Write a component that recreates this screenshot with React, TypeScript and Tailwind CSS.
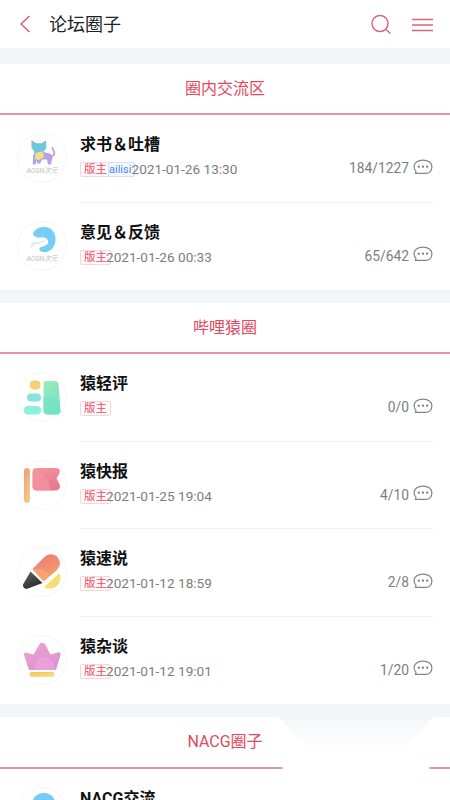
import React from "react";

type Kind = "cat" | "wave" | "blocks" | "flag" | "pencil" | "crown";

interface Row {
  title: string;
  kind: Kind;
  user?: string;
  date?: string;
  count: string;
}

const chat: Row[] = [
  { title: "求书＆吐槽", kind: "cat", user: "ailisi", date: "2021-01-26 13:30", count: "184/1227" },
  { title: "意见＆反馈", kind: "wave", date: "2021-01-26 00:33", count: "65/642" },
];

const bili: Row[] = [
  { title: "猿轻评", kind: "blocks", count: "0/0" },
  { title: "猿快报", kind: "flag", date: "2021-01-25 19:04", count: "4/10" },
  { title: "猿速说", kind: "pencil", date: "2021-01-12 18:59", count: "2/8" },
  { title: "猿杂谈", kind: "crown", date: "2021-01-12 19:01", count: "1/20" },
];

const nacg: Row[] = [{ title: "NACG交流", kind: "wave", count: "" }];

function Caption() {
  return (
    <text x="25" y="39.800" textAnchor="middle" fontSize="7.500" fontStyle="italic" textLength="31" lengthAdjust="spacingAndGlyphs" fill="#bdbdbd" className="font-[Roboto,'Noto_Sans_CJK_SC',sans-serif]">
      ACGN次元
    </text>
  );
}

function Picture({ kind }: { kind: Kind }) {
  switch (kind) {
    case "cat":
      return (
        <>
          <path d="M33 22.500c3.500 1.200 4.800-.5 4.200-3.500-.4-1.800-2-2.500-1.700-4" fill="none" stroke="#bd9be6" strokeWidth="1.800" strokeLinecap="round" />
          <path d="M14.500 7l4.500 3.300h5.500L29 7.500l.3 7.500-2.800 4 6 1.500c3 1 3.500 4 2.300 7l-.8 4h-3l-1-5h-5l-1.800 4h-3l-.7-3-1 4h-2.700l.3-8.500L17.500 19l-3-4.500z" fill="url(#catg)" />
          <path d="M18.500 20l7.500-2 1 6-5 3-4-1z" fill="#f6dc84" />
          <path d="M15 8.500l4.300 2.800h5.400L28.500 9l.3 5.500-3.800 4-6.500.3-3.500-4.500z" fill="#6bcbdc" />
          <Caption />
        </>
      );
    case "wave":
      return (
        <>
          <path d="M16 12.500C18 7.500 24 5 29.500 6.200C37 7.500 39.500 15 38.300 21C37 28 31.500 31.800 26 31C22.500 30.500 21 28 23.500 26.300C26 25 30 25 31 22C31.700 18 28 15.500 24 16.500C20 17 16.500 15.500 16 12.500Z" fill="#76ccf4" />
          <path d="M13.500 21.500c5-.5 10-.5 16-3.500-1 3-7 5-12 5.500l-4 4c0-2 .5-3 2-4.500z" fill="#d5edf9" />
          <Caption />
        </>
      );
    case "blocks":
      return (
        <>
          <rect x="13" y="8.500" width="10.500" height="9" rx="4" fill="#f7d071" />
          <rect x="10" y="21.500" width="14" height="8" rx="4" fill="#8be2d7" />
          <rect x="7" y="34" width="17" height="8.500" rx="4" fill="#8cf0de" />
          <path d="M29 9h9c2 0 3 1 3.500 3L43.500 38c.3 3-1 4.500-3 4.500H30.500c-2.500 0-4-1.500-4-4V12c0-2 .8-3 2.500-3z" fill="url(#greeng)" />
          <path d="M26.500 25c7-3 14 2 16 9l1 4c.3 3-1 4.500-3 4.500H30.500c-2.500 0-4-1.500-4-4z" fill="#74e2c8" opacity=".7" />
        </>
      );
    case "flag":
      return (
        <>
          <rect x="7" y="8" width="6" height="35" rx="3" fill="url(#poleg)" />
          <path d="M19.500 8H38c4.500 0 6 2.500 4 6l-2.500 4.500 3 5.500c1.500 4-.5 6.500-4 6.500H20c-3 0-4.500-1.500-4.500-4.500V12c0-2.500 1.500-4 4-4z" fill="url(#flagg)" />
          <path d="M15.500 13c8-2 18 5 18 17.500H20c-3 0-4.500-1.500-4.500-4.500z" fill="#f596a3" opacity=".6" />
        </>
      );
    case "pencil":
      return (
        <>
          <path d="M15.500 22L28 9.500c7-6 17 .5 14.500 9.500L40 23 26.500 34.500z" fill="url(#peng)" />
          <path d="M15.500 22c7-2 15 2 17 7.500l-6 5z" fill="#f9a878" opacity=".7" />
          <path d="M13.500 24.500L25.500 36 11 41.500c-4 1-5.500-.5-5-4z" fill="url(#tipg)" />
          <path d="M43 27.500c2 9-4 16-14.500 13.500-1-.3-1-1.500 0-2.300L42 26.500z" fill="#f8dd74" />
        </>
      );
    case "crown":
      return (
        <>
          <path d="M12 35L7 20c-.5-2 1.500-3.200 3-2l6.500 1.500L22 10c1.500-3 5-3 6.500 0l5 9.500L41 17.500c2-.7 3 .5 2.500 2.500L39 35z" fill="url(#crowng)" />
          <path d="M18 35c-1-8 4-13 9-13 6 0 10 4 11.500 13z" fill="#f3aade" opacity=".55" />
          <rect x="12.500" y="37" width="25" height="5" rx="2.500" fill="url(#goldg)" />
        </>
      );
  }
}

function Gradients() {
  const list = [
    ["catg", "#5ccbdc", "#c49be6"],
    ["greeng", "#9debb9", "#76e2c2"],
    ["poleg", "#f09a7c", "#f7ca85"],
    ["flagg", "#f5979f", "#e9788f"],
    ["peng", "#f0727a", "#f4a365"],
    ["tipg", "#686868", "#2a2a2a"],
    ["crowng", "#eda4cd", "#df92d3"],
    ["goldg", "#efc34f", "#f9dd87"],
  ];
  return (
    <svg className="absolute size-0" aria-hidden="true">
      <defs>
        {list.map(([id, a, b]) => (
          <linearGradient key={id} id={id} x1="0" y1="0" x2="0.6" y2="1">
            <stop offset="0" stopColor={a} />
            <stop offset="1" stopColor={b} />
          </linearGradient>
        ))}
      </defs>
    </svg>
  );
}

function Bubble() {
  return (
    <svg className="h-4 w-5" viewBox="0 0 20 16" fill="none" stroke="#858585" strokeWidth="1.200">
      <path d="M2.300 14.400H12.500C16.500 14.400 18.900 11.500 18.900 7.800C18.900 4 15.500 1.200 10 1.200C4.500 1.200 1.100 4 1.100 7.700C1.100 9.700 1.700 11 2.900 12.200C3 13 2.800 13.700 2.300 14.400Z" strokeLinejoin="round" />
      <g fill="#777" stroke="none">
        <circle cx="5.800" cy="7.700" r="1.100" />
        <circle cx="10" cy="7.700" r="1.100" />
        <circle cx="14.200" cy="7.700" r="1.100" />
      </g>
    </svg>
  );
}

function ForumRow({ row, last }: { row: Row; last: boolean }) {
  return (
    <div className="flex h-[87.500px] shrink-0 pl-[17px]">
      <div className="mt-[18px] size-[50px] shrink-0 overflow-hidden rounded-full border border-[#f6f6f6]">
        <svg className="-m-px size-[50px]" viewBox="0 0 50 50">
          <Picture kind={row.kind} />
        </svg>
      </div>
      <div className={`ml-[13px] mr-[17px] flex flex-1 justify-between border-b ${last ? "border-transparent" : "border-[#f1f1f2]"}`}>
        <div className="pt-[18px]">
          <h2 className="h-6 whitespace-nowrap text-[16px] leading-6 font-bold text-[#111]">{row.title}</h2>
          {row.count && (
            <div className="mt-[3px] flex h-[18px] items-center whitespace-nowrap">
              <span className="mt-px flex h-[15px] items-center rounded-[2px] border border-[#fbd3da] bg-[#fffafa] px-[3px] text-[11.500px] leading-[13px] text-[#f04b64]">版主</span>
              {row.user && (
                <span className="mt-px -ml-[3px] flex h-[15px] w-[27px] items-center rounded-[2px] border border-[#cfe0fa] bg-[#f5f9ff] text-[11px] leading-[13px] text-[#4a86ea]">{row.user}</span>
              )}
              {row.date && <span className={`text-[13.600px] leading-[18px] text-[#7d7d7d] ${row.user ? "-ml-[3.500px]" : "-ml-[5px]"}`}>{row.date}</span>}
            </div>
          )}
        </div>
        {row.count && (
          <div className="mt-[43px] flex h-5 items-center gap-1">
            <span className="text-[13.800px] leading-5 text-[#7d7d7d]">{row.count}</span>
            <span className="-mt-[3px]">
              <Bubble />
            </span>
          </div>
        )}
      </div>
    </div>
  );
}

function Section({ name, rows, size }: { name: string; rows: Row[]; size: string }) {
  return (
    <section className="shrink-0 bg-white">
      <h1 className={`flex items-center justify-center border-b-2 border-[#e595a2] text-[16px] text-[#e34860] ${size}`}>{name}</h1>
      {rows.map((r, i) => (
        <ForumRow key={r.title} row={r} last={i === rows.length - 1} />
      ))}
    </section>
  );
}

export default function App() {
  return (
    <div className="relative flex h-[800px] w-[450px] flex-col overflow-hidden bg-[#f4f5f8] font-[Roboto,'Noto_Sans_CJK_SC',sans-serif]">
      <Gradients />
      <header className="flex h-12 shrink-0 items-center bg-white pr-[17px] pl-5">
        <svg className="h-[18px] w-[11px]" viewBox="0 0 11 18" fill="none" stroke="#dc5a6e" strokeWidth="1.500">
          <path d="M9.500 1L1 9l8.500 8" />
        </svg>
        <span className="mt-px ml-[18px] flex-1 text-[18px] leading-6 text-[#222]">论坛圈子</span>
        <svg className="mt-[2px] size-5" viewBox="0 0 20 20" fill="none" stroke="#dc6073" strokeWidth="1.400">
          <circle cx="9" cy="8.500" r="8" />
          <path d="M14.500 14L19.500 18.500" />
        </svg>
        <svg className="mt-px ml-[21px] h-[14px] w-[21px]" viewBox="0 0 21 14" stroke="#dc6477" strokeWidth="1.600">
          <path d="M0 1.500h21M0 7h21M0 12.500h21" />
        </svg>
      </header>
      <div className="h-4 shrink-0" />
      <Section name="圈内交流区" rows={chat} size="h-[51px]" />
      <div className="h-[13px] shrink-0" />
      <Section name="哔哩猿圈" rows={bili} size="h-[51px]" />
      <div className="h-[13px] shrink-0" />
      <Section name="NACG圈子" rows={nacg} size="h-[52px]" />
      <div className="absolute top-[717px] left-[278px] h-[32px] w-[156px] bg-linear-to-b from-[#f5f6f8] to-white [clip-path:polygon(0_0,100%_0,80%_100%,20%_100%)]" />
      <div className="absolute top-[762px] left-[280px] h-[38px] w-[152px] bg-white [clip-path:polygon(2%_0,98%_0,100%_100%,0_100%)]" />
    </div>
  );
}
